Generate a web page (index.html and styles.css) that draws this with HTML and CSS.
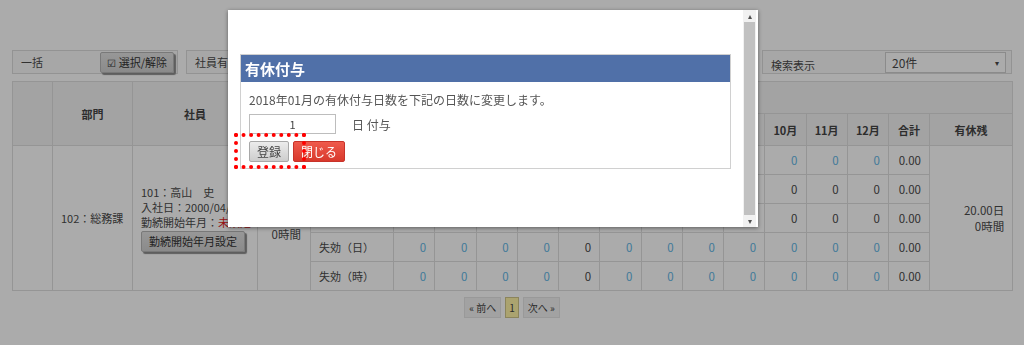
FILE: index.html
```html
<!DOCTYPE html>
<html lang="ja">
<head>
  <meta charset="UTF-8">
  <title>有休管理</title>
  <link rel="stylesheet" href="styles.css">
</head>
<body>
  <div class="page">
    <div class="filters">
      <div class="fbox fbox-bulk">
        <span>一括</span>
        <button class="btn btn-grey"><span class="chk">&#9745;</span>選択/解除</button>
      </div>
      <div class="fbox fbox-mid">
        <span>社員有休付与日数</span>
      </div>
      <div class="fbox fbox-view">
        <span class="view-label">検索表示</span>
        <div class="select">20件<span class="caret">&#9662;</span></div>
      </div>
    </div>

    <table class="grid">
      <colgroup>
        <col style="width:40px"><col style="width:80px"><col style="width:125px"><col style="width:53px"><col style="width:83px">
        <col class="m"><col class="m"><col class="m"><col class="m"><col class="m"><col class="m">
        <col class="m"><col class="m"><col class="m"><col class="m"><col class="m"><col class="m">
        <col style="width:41px"><col style="width:83px">
      </colgroup>
      <thead>
        <tr>
          <th rowspan="2"></th>
          <th rowspan="2">部門</th>
          <th rowspan="2">社員</th>
          <th rowspan="2">付与</th>
          <th rowspan="2">区分</th>
          <th colspan="14">2018年</th>
        </tr>
        <tr>
          <th>1月</th><th>2月</th><th>3月</th><th>4月</th><th>5月</th><th>6月</th>
          <th>7月</th><th>8月</th><th>9月</th><th>10月</th><th>11月</th><th>12月</th>
          <th>合計</th><th>有休残</th>
        </tr>
      </thead>
      <tbody>
        <tr>
          <td rowspan="5"></td>
          <td rowspan="5" class="dept">102：総務課</td>
          <td rowspan="5" class="emp">
            101：高山　史<br>
            入社日：2000/04/01<br>
            勤続開始年月：<span class="warn">未設定</span><br>
            <button class="btn btn-grey btn-long">勤続開始年月設定</button>
          </td>
          <td rowspan="5" class="num grant">20.00日<br>0時間</td>
          <td class="lbl">付与</td>
          <td class="num link">0</td><td class="num link">0</td><td class="num link">0</td><td class="num link">0</td>
          <td class="num link">0</td><td class="num link">0</td><td class="num link">0</td><td class="num link">0</td>
          <td class="num link">0</td><td class="num link">0</td><td class="num link">0</td><td class="num link">0</td>
          <td class="num">0.00</td>
          <td rowspan="5" class="num rest">20.00日<br>0時間</td>
        </tr>
        <tr>
          <td class="lbl">取得（日）</td>
          <td class="num">0</td><td class="num">0</td><td class="num">0</td><td class="num">0</td>
          <td class="num">0</td><td class="num">0</td><td class="num">0</td><td class="num">0</td>
          <td class="num">0</td><td class="num">0</td><td class="num">0</td><td class="num">0</td>
          <td class="num">0.00</td>
        </tr>
        <tr>
          <td class="lbl">取得（時）</td>
          <td class="num">0</td><td class="num">0</td><td class="num">0</td><td class="num">0</td>
          <td class="num">0</td><td class="num">0</td><td class="num">0</td><td class="num">0</td>
          <td class="num">0</td><td class="num">0</td><td class="num">0</td><td class="num">0</td>
          <td class="num">0.00</td>
        </tr>
        <tr>
          <td class="lbl">失効（日）</td>
          <td class="num link">0</td><td class="num link">0</td><td class="num link">0</td><td class="num link">0</td>
          <td class="num">0</td><td class="num link">0</td><td class="num link">0</td><td class="num link">0</td>
          <td class="num link">0</td><td class="num link">0</td><td class="num link">0</td><td class="num link">0</td>
          <td class="num">0.00</td>
        </tr>
        <tr>
          <td class="lbl">失効（時）</td>
          <td class="num link">0</td><td class="num link">0</td><td class="num link">0</td><td class="num link">0</td>
          <td class="num">0</td><td class="num link">0</td><td class="num link">0</td><td class="num link">0</td>
          <td class="num link">0</td><td class="num link">0</td><td class="num link">0</td><td class="num link">0</td>
          <td class="num">0.00</td>
        </tr>
      </tbody>
    </table>

    <div class="pager">
      <span class="pg">« 前へ</span>
      <span class="pg current">1</span>
      <span class="pg">次へ »</span>
    </div>
  </div>

  <div class="overlay"></div>

  <div class="modal">
    <div class="modal-inner">
      <div class="panel">
        <div class="panel-head">有休付与</div>
        <div class="panel-body">
          <p class="msg">2018年01月の有休付与日数を下記の日数に変更します。</p>
          <div class="days">
            <input class="days-input" type="text" value="1">
            <span>日 付与</span>
          </div>
          <div class="actions">
            <button class="btn btn-save">登録</button>
            <button class="btn btn-close">閉じる</button>
            <div class="mark"></div>
          </div>
        </div>
      </div>
    </div>
    <div class="scrollbar">
      <span class="arrow">&#9652;</span>
      <div class="thumb"></div>
      <span class="arrow">&#9662;</span>
    </div>
  </div>
</body>
</html>
```

FILE: styles.css
```css
html,
body {
  margin: 0;
  padding: 0;
  background: #fff;
  font-family: "Noto Sans CJK JP", sans-serif;
  font-size: 11px;
  color: #4a4a4a;
}

.page {
  padding: 50px 12px 0 12px;
  width: 1000px;
}

/* filter bar */
.filters {
  display: flex;
  height: 24px;
}

.fbox {
  display: flex;
  align-items: center;
  box-sizing: border-box;
  border: 1px solid #dcdcdc;
  background: #fafafa;
}

.fbox-bulk {
  width: 166px;
  padding: 0 3px 0 8px;
  justify-content: space-between;
}

.fbox-mid {
  width: 570px;
  margin-left: 8px;
  padding-left: 8px;
}

.fbox-view {
  width: 250px;
  margin-left: 6px;
  padding: 0 5px 0 8px;
  justify-content: space-between;
}

.view-label {
  padding-top: 6px;
}

.select {
  box-sizing: border-box;
  width: 121px;
  height: 21px;
  border: 1px solid #cfcfcf;
  background: #fff;
  padding: 0 6px;
  display: flex;
  align-items: center;
  justify-content: space-between;
  font-size: 12px;
}

.caret {
  font-size: 8px;
}

.btn {
  font-family: "Noto Sans CJK JP", sans-serif;
  font-size: 12px;
  cursor: pointer;
}

.btn-grey {
  height: 21px;
  padding: 0 6px;
  font-size: 11px;
  border: 1px solid #b5b5b5;
  border-radius: 2px;
  background: linear-gradient(#e2e2e2, #cfcfcf);
  box-shadow: 2px 2px 1px #8c8c8c;
  color: #333;
  display: flex;
  align-items: center;
}

.chk {
  font-size: 10px;
  margin-right: 3px;
}

/* table */
.grid {
  margin-top: 7px;
  width: 1000px;
  table-layout: fixed;
  border-collapse: collapse;
}

.grid col.m {
  width: 41.25px;
}

.grid th,
.grid td {
  border: 1px solid #dedede;
  padding: 0 8px;
}

.grid th {
  background: #f4f4f4;
  height: 31px;
  font-weight: bold;
  text-align: center;
  color: #444;
}

.grid td {
  height: 28px;
  background: #fff;
}

.num {
  text-align: right;
  font-size: 11.5px;
}

.link {
  color: #62b6e6;
}

.grid td.grant {
  padding: 0 9px 0 8px;
}

.grid td.dept {
  padding: 0 4px 0 8px;
  white-space: nowrap;
}

.grid td.emp {
  padding: 0 8px;
  line-height: 15px;
  white-space: nowrap;
  overflow: hidden;
}

.warn {
  color: #e02020;
}

.btn-long {
  margin-top: 1px;
  padding: 0 7px;
}

/* pager */
.pager {
  display: flex;
  justify-content: center;
  gap: 4px;
  margin-top: 6px;
  font-size: 10px;
}

.pg {
  height: 21px;
  box-sizing: border-box;
  border: 1px solid #e4e4e4;
  background: #f2f2f2;
  padding: 0 4px;
  display: flex;
  align-items: center;
  color: #444;
}

.pg.current {
  background: #fff3a6;
  border-color: #cfc58a;
  padding: 0 3px;
}

/* modal */
.overlay {
  position: fixed;
  inset: 0;
  background: rgba(0, 0, 0, 0.33);
}

.modal {
  position: absolute;
  left: 228px;
  top: 10px;
  width: 530px;
  height: 217px;
  background: #fff;
  box-shadow: 0 1px 4px rgba(0, 0, 0, 0.45);
  display: flex;
}

.modal-inner {
  flex: 1;
  padding: 44px 12px 0 12px;
}

.panel {
  border: 1px solid #d0d0d0;
}

.panel-head {
  background: #5070a8;
  color: #fff;
  font-weight: bold;
  font-size: 15px;
  height: 27px;
  line-height: 27px;
  padding-left: 4px;
}

.panel-body {
  padding: 9px 8px 6px 8px;
  color: #555;
  font-size: 12px;
}

.msg {
  margin: 0 0 6px 0;
}

.days {
  display: flex;
  align-items: center;
  gap: 16px;
}

.days-input {
  box-sizing: border-box;
  width: 87px;
  height: 20px;
  border: 1px solid #bdbdbd;
  text-align: center;
  font-family: "Noto Sans CJK JP", sans-serif;
  font-size: 11px;
  color: #444;
  padding: 0;
}

.actions {
  position: relative;
  display: flex;
  gap: 4px;
  margin-top: 7px;
}

.btn-save,
.btn-close {
  height: 21px;
  border-radius: 2px;
  padding: 0 7px;
}

.btn-save {
  border: 1px solid #a8a8a8;
  background: linear-gradient(#ececec, #cdcdcd);
  color: #444;
}

.btn-close {
  border: 1px solid #c8332a;
  background: linear-gradient(#ef5a4c, #d8392c);
  color: #fff;
}

.mark {
  position: absolute;
  left: -15px;
  top: -8px;
  width: 64px;
  height: 28px;
  border: 4px dotted #f00;
}

.scrollbar {
  width: 13px;
  margin: 0 2px 0 0;
  display: flex;
  flex-direction: column;
  align-items: center;
  background: #f1f1f1;
}

.arrow {
  font-size: 8px;
  height: 12px;
  line-height: 12px;
  color: #505050;
}

.thumb {
  flex: 1;
  width: 11px;
  background: #c1c1c1;
}
```
